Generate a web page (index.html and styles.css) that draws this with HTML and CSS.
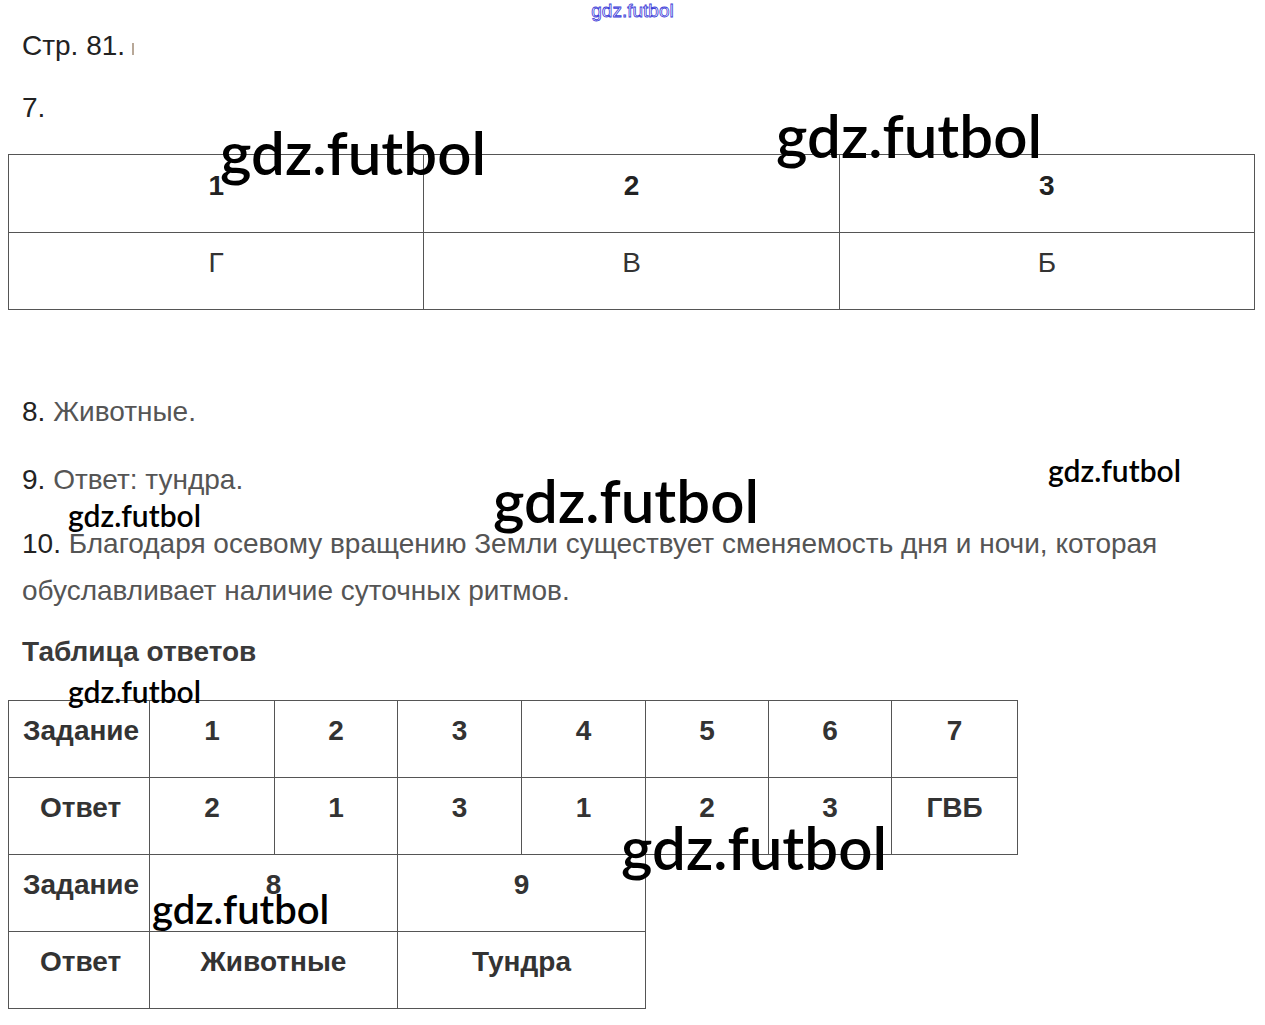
FILE: index.html
```html
<!DOCTYPE html>
<html lang="ru">
<head>
<meta charset="utf-8">
<title>Стр. 81</title>
<link rel="stylesheet" href="styles.css">
</head>
<body>
<div class="page">
  <div class="site-mark">gdz.futbol</div>
  <p class="line head">Стр. 81.<span class="cut"></span></p>
  <p class="line num">7.</p>
  <table class="t1">
    <tr class="r-head"><td>1</td><td>2</td><td>3</td></tr>
    <tr class="r-body"><td>Г</td><td>В</td><td>Б</td></tr>
  </table>
  <p class="line ans a8"><b>8.</b> Животные.</p>
  <p class="line ans a9"><b>9.</b> Ответ: тундра.</p>
  <p class="line ans a10"><b>10.</b> Благодаря осевому вращению Земли существует сменяемость дня и ночи, которая<br>обуславливает наличие суточных ритмов.</p>
  <p class="line title">Таблица ответов</p>
  <table class="t2">
    <colgroup>
      <col class="c0"><col class="c1"><col class="c2"><col class="c3"><col class="c4"><col class="c5"><col class="c6"><col class="c7">
    </colgroup>
    <tr><td class="lbl">Задание</td><td>1</td><td>2</td><td>3</td><td>4</td><td>5</td><td>6</td><td>7</td></tr>
    <tr><td class="lbl ot">Ответ</td><td>2</td><td>1</td><td>3</td><td>1</td><td>2</td><td>3</td><td>ГВБ</td></tr>
    <tr><td class="lbl">Задание</td><td colspan="2">8</td><td colspan="2">9</td></tr>
    <tr><td class="lbl ot">Ответ</td><td colspan="2">Животные</td><td colspan="2">Тундра</td></tr>
  </table>

  <span class="wm big w1">gdz.futbol</span>
  <span class="wm big w2">gdz.futbol</span>
  <span class="wm big w3">gdz.futbol</span>
  <span class="wm big w4">gdz.futbol</span>
  <span class="wm mid w5">gdz.futbol</span>
  <span class="wm mid w6">gdz.futbol</span>
  <span class="wm mid w7">gdz.futbol</span>
  <span class="wm lg w8">gdz.futbol</span>
</div>
</body>
</html>
```

FILE: styles.css
```css
html, body {
  margin: 0;
  padding: 0;
  background: #fff;
}
.page {
  position: relative;
  width: 1265px;
  height: 1025px;
  overflow: hidden;
  font-family: "Liberation Sans", Arial, sans-serif;
  color: #333;
}
.site-mark {
  height: 22px;
  text-align: center;
  font-family: "Liberation Sans", Arial, sans-serif;
  font-size: 19px;
  line-height: 22px;
  color: #fff;
  -webkit-text-stroke: 0.8px #3a3ad8;
}
.line {
  margin: 0;
  padding-left: 22px;
  font-size: 28px;
  line-height: 32px;
}
.head {
  margin-top: 8px;
  color: #222;
}
.cut {
  display: inline-block;
  width: 2px;
  height: 12px;
  margin-left: 7px;
  background: #b8a898;
}
.num {
  margin-top: 30px;
  color: #222;
}
table {
  border-collapse: collapse;
  margin-left: 8px;
}
td {
  border: 1px solid #555;
  padding: 0;
  text-align: center;
  vertical-align: top;
  box-sizing: border-box;
}
.t1 {
  margin-top: 30px;
  width: 1247px;
  table-layout: fixed;
}
.t1 td {
  font-size: 28px;
  line-height: 32px;
  color: #333;
}
.t1 .r-head td {
  height: 78px;
  padding-top: 15px;
  font-weight: bold;
  color: #222;
}
.t1 .r-body td {
  height: 77px;
  padding-top: 14px;
}
.ans {
  color: #555;
}
.ans b {
  color: #222;
  font-weight: normal;
}
.a8 {
  margin-top: 86px;
}
.a9 {
  margin-top: 36px;
}
.a10 {
  margin-top: 24px;
  line-height: 47px;
}
.title {
  margin-top: 22px;
  font-weight: bold;
  color: #3a3a3a;
}
.t2 {
  margin-top: 32px;
  table-layout: fixed;
  width: 1009px;
}
.c0 { width: 141px; }
.c1 { width: 125px; }
.c2 { width: 123px; }
.c3 { width: 124px; }
.c4 { width: 124px; }
.c5 { width: 123px; }
.c6 { width: 123px; }
.c7 { width: 126px; }
.t2 td {
  height: 77px;
  padding-top: 14px;
  font-size: 28px;
  line-height: 32px;
  font-weight: bold;
  color: #333;
}
.t2 td.lbl {
  text-align: left;
  padding-left: 14px;
}
.t2 td.ot {
  padding-left: 31px;
}
.wm {
  position: absolute;
  font-family: Lato, "Open Sans", sans-serif;
  font-weight: 600;
  color: #000;
  white-space: nowrap;
  line-height: 1;
}
.big { font-size: 60px; }
.mid { font-size: 30px; }
.lg { font-size: 40px; }
.w1 { left: 220px; top: 122px; }
.w2 { left: 776px; top: 105px; }
.w3 { left: 493px; top: 470px; }
.w4 { left: 621px; top: 817px; }
.w5 { left: 1048px; top: 455px; }
.w6 { left: 68px; top: 500px; }
.w7 { left: 68px; top: 676px; }
.w8 { left: 152px; top: 889px; }
```
